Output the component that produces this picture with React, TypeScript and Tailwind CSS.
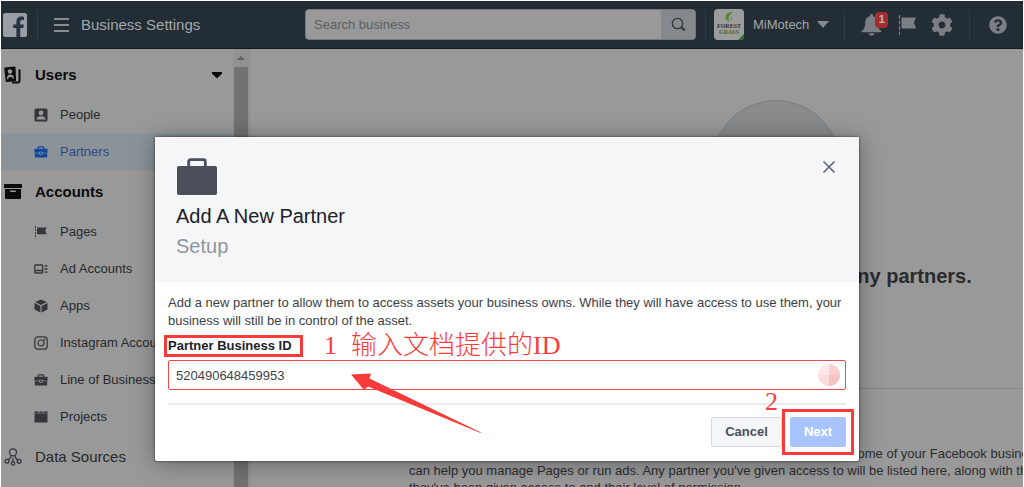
import type { ReactNode } from "react";
import { FaCog, FaQuestionCircle } from "react-icons/fa";
import { X } from "lucide-react";

function FacebookLogo() {
  return (
    <svg width="24" height="24" viewBox="0 0 24 24" aria-label="Facebook">
      <rect width="24" height="24" rx="2" fill="#9a9da3" />
      <path
        d="M13.4 24v-9h-3.200v-3.600h3.200V8.600c0-3.200 2-5 4.900-5 1.300 0 2 .1 2.700.2v3.200h-1.900c-1.500 0-1.900.8-1.900 1.900v2.500h3.600l-.5 3.600h-3.100v9z"
        fill="#26344a"
      />
    </svg>
  );
}

function UsersIcon() {
  return (
    <svg width="18" height="18" viewBox="0 0 18 18">
      <path d="M1 1.500 10.500.5c.5 0 .9.300 1 .8l.5 12.900c0 .5-.3.900-.8 1l-8.500.8c-.5 0-.9-.3-1-.8L.3 2.500c0-.5.2-.9.7-1z" fill="#0b0b0d" />
      <path d="M15.500 3.500v11c0 1.300-.7 2-2 2H8" fill="none" stroke="#0b0b0d" strokeWidth="2" />
      <circle cx="6" cy="5.500" r="2.300" fill="#999" />
      <path d="M2.900 13.300c0-3.200 1.100-4.600 3.400-4.700 2.300 0 3.400 1.200 3.700 4.100l-1.500.1-.3-1.800-3.600.3-.2 1.900z" fill="#999" />
    </svg>
  );
}

function ArchiveIcon() {
  return (
    <svg width="18" height="16" viewBox="0 0 18 16" fill="#0b0b0d">
      <rect width="18" height="4" rx=".6" />
      <path d="M1 5h16v9.200c0 .5-.3.8-.8.8H1.800c-.5 0-.8-.3-.8-.8z" />
      <rect x="6" y="6.500" width="6" height="1.500" rx=".7" fill="#999" />
    </svg>
  );
}

function NetworkIcon() {
  return (
    <svg width="18" height="18" viewBox="0 0 18 18" fill="none" stroke="#34363b" strokeWidth="1.300">
      <circle cx="9" cy="4.300" r="3.500" />
      <path d="M7.200 7.300c0 2.400-.8 3.200-2.900 4.900M10.800 7.300c0 2.400.8 3.200 2.900 4.900M9 10v3.500" />
      <circle cx="2.900" cy="13.300" r="1.900" />
      <circle cx="9" cy="15.400" r="1.700" />
      <circle cx="15.100" cy="13.300" r="1.900" />
    </svg>
  );
}

function PersonIcon() {
  return (
    <svg width="14" height="14" viewBox="0 0 14 14">
      <rect x=".5" y=".5" width="13" height="13" rx="1.600" fill="#34363b" />
      <circle cx="7" cy="5" r="2.400" fill="#999" />
      <path d="M2.500 11.500c.1-1.800 1.200-2.800 3.200-3.200h2.600c2 .4 3.100 1.400 3.200 3.200z" fill="#999" />
    </svg>
  );
}

function ToolboxIcon({ fill, gap }: { fill: string; gap: string }) {
  return (
    <svg width="14" height="14" viewBox="0 0 14 14">
      <path d="M4.300 4V2.600c0-.5.3-.8.8-.8h3.800c.5 0 .8.3.8.8V4" fill="none" stroke={fill} strokeWidth="1.300" />
      <path d="M1.200 3.700h11.600c.5 0 .8.3.8.8v3.200H.4V4.500c0-.5.3-.8.8-.8z" fill={fill} />
      <path d="M.8 8.300h12.400v3.500c0 .4-.3.7-.7.7h-11c-.4 0-.7-.3-.7-.7z" fill={fill} />
      <path d="M5.200 6.700h3.600v2.600l-1.800.9-1.800-.9z" fill={gap} />
      <path d="M6 7.400h2v1.500l-1 .5-1-.5z" fill={fill} />
    </svg>
  );
}

function FlagIcon() {
  return (
    <svg width="14" height="14" viewBox="0 0 14 14" fill="#34363b">
      <path d="M1.500 1v12.500" stroke="#34363b" strokeWidth="1" strokeDasharray="2 1" />
      <path d="M3 2.500h9.600l-1.300 3.200 1.300 3.600H3z" />
    </svg>
  );
}

function AdIcon() {
  return (
    <svg width="14" height="14" viewBox="0 0 14 14" fill="none" stroke="#34363b" strokeWidth="1.300">
      <rect x=".8" y="3" width="7.800" height="8" rx=".8" />
      <path d="M1 8.500h7.500M10.500 3.800h3M10.500 7h3M10.500 10.200h3" />
    </svg>
  );
}

function CubeIcon() {
  return (
    <svg width="14" height="14" viewBox="0 0 14 14" fill="#34363b">
      <path d="M7 .5l5.800 2.600L7 5.900 1.200 3.100zM.5 4.100l5.900 2.800v6.600L.5 10.500zM13.500 4.100L7.600 6.900v6.600l5.900-3z" />
    </svg>
  );
}

function InstagramIcon() {
  return (
    <svg width="14" height="14" viewBox="0 0 14 14" fill="none" stroke="#34363b" strokeWidth="1.200">
      <rect x=".8" y=".8" width="12.400" height="12.400" rx="3" />
      <circle cx="7" cy="7" r="3" />
      <circle cx="10.500" cy="3.500" r=".4" fill="#34363b" />
    </svg>
  );
}

function ProjectsIcon() {
  return (
    <svg width="14" height="14" viewBox="0 0 14 14" fill="#34363b">
      <path d="M.5 1.500h4v1.200h1V1.500h3v1.200h1V1.500h4v11H.5z" />
      <path d="M.5 3.500h13" stroke="#77797c" strokeWidth=".6" />
    </svg>
  );
}

function BriefcaseIcon() {
  return (
    <svg width="42" height="38" viewBox="0 0 42 38">
      <path d="M12.700 10V4.500c0-1.200.6-1.800 1.800-1.800h13c1.200 0 1.800.6 1.800 1.800V10" fill="none" stroke="#4b4f5a" strokeWidth="2.800" />
      <rect x="1" y="9" width="40" height="29" rx="1.800" fill="#4b4f5a" />
    </svg>
  );
}

function BellIcon() {
  return (
    <svg width="21" height="22" viewBox="0 0 21 22" fill="#7b7f84">
      <path d="M10.500 0c.9 0 1.600.7 1.600 1.600v.6c2.900.7 4.700 3 4.700 6.200 0 4.600.9 6.600 3.400 8.400.5.400.3 1.400-.6 1.400H1.400c-.9 0-1.100-1-.6-1.400 2.500-1.800 3.400-3.800 3.400-8.400 0-3.200 1.800-5.500 4.700-6.200v-.6c0-.9.7-1.600 1.600-1.600z" />
      <path d="M7.500 19.300h6c-.3 1.500-1.500 2.400-3 2.400s-2.700-.9-3-2.400z" />
    </svg>
  );
}

function BrandAvatar() {
  return (
    <span className="relative flex h-[31px] w-[30px] flex-col items-center overflow-hidden rounded-sm bg-[#9c9c9c] pt-[2px]">
      <svg width="12" height="12" viewBox="0 0 12 12">
        <path d="M10.500 1C5.500.6 2.200 3 2.400 6.200c.1 2.300 2 3.900 4.200 4.300C4.700 7.500 5.700 3.600 10.500 1z" fill="#4f8a35" />
        <path d="M8 4.500c1.800 1.700 1.800 4.200-.5 5.700.5-2 .6-3.700.5-5.700z" fill="#6b8f4a" />
      </svg>
      <span className="font-['Liberation_Serif',serif] text-[6px] leading-[6px] font-bold text-[#333]">FOREST</span>
      <span className="font-['Liberation_Serif',serif] text-[6px] leading-[6px] font-bold text-[#3d6b2e]">GRASS</span>
      <svg className="absolute right-0 bottom-0" width="6" height="6" viewBox="0 0 6 6">
        <path d="M6 0v6H0z" fill="#1f7a1a" />
      </svg>
    </span>
  );
}

function TopBar() {
  return (
    <header className="flex h-12 shrink-0 items-center border-b border-[#15191d] bg-[#222d36] text-[#a4a7aa]">
      <div className="flex w-[304px] shrink-0 items-center pl-[2px]">
        <FacebookLogo />
        <span className="ml-[10px] h-[30px] w-px bg-[#2f3d4b]" />
        <button type="button" aria-label="Menu" className="ml-4 flex w-[15px] flex-col gap-1">
          <span className="h-[2px] bg-[#888c90]" />
          <span className="h-[2px] bg-[#888c90]" />
          <span className="h-[2px] bg-[#888c90]" />
        </button>
        <h1 className="ml-3 text-[15px] leading-5 font-medium">Business Settings</h1>
      </div>
      <form className="flex h-[31px] min-w-0 flex-1 overflow-hidden rounded-sm border border-[#75797d] bg-[#999]">
        <input
          type="text"
          aria-label="Search business"
          placeholder="Search business"
          className="min-w-0 flex-1 px-2 text-[13px] text-[#333] outline-none placeholder:text-[#5c5e62]"
        />
        <button type="button" aria-label="Search" className="flex w-[34px] items-center justify-center bg-[#85888c]">
          <svg width="15" height="15" viewBox="0 0 15 15" fill="none" stroke="#33363a" strokeWidth="1.300">
            <circle cx="6.500" cy="6.500" r="5.200" />
            <path d="M10.300 10.300l3.500 3" strokeWidth="2.200" />
          </svg>
        </button>
      </form>
      <div className="flex w-[327px] shrink-0 items-center pl-[9px]">
        <span className="h-[30px] w-px bg-[#2f3d4b]" />
        <button type="button" className="ml-2 flex items-center">
          <BrandAvatar />
          <span className="ml-[9px] text-[13px] leading-4">MiMotech</span>
          <svg className="ml-2" width="12" height="7" viewBox="0 0 12 7">
            <path d="M0 0h12L6 7z" fill="#85898d" />
          </svg>
        </button>
        <span className="ml-[15px] h-[30px] w-px bg-[#2f3d4b]" />
        <button type="button" aria-label="Notifications" className="relative ml-4">
          <BellIcon />
          <span className="absolute -top-[2px] left-[14px] flex h-4 w-[13px] items-center justify-center rounded-sm bg-[#a62c2f] text-[11px] font-bold text-[#bbb]">
            1
          </span>
        </button>
        <button type="button" aria-label="Pages" className="ml-4">
          <svg width="20" height="22" viewBox="0 0 20 22" fill="#7b7f84">
            <path d="M1.500 1v20" stroke="#7b7f84" strokeWidth="1.200" strokeDasharray="4 1.500" />
            <path d="M3.500 3.500H18l-2 5 2 6H3.500z" />
          </svg>
        </button>
        <button type="button" aria-label="Settings" className="ml-[13px] text-[#7b7f84]">
          <FaCog size={22} />
        </button>
        <span className="ml-4 h-[30px] w-px bg-[#2f3d4b]" />
        <button type="button" aria-label="Help" className="ml-[19px] text-[#7b7f84]">
          <FaQuestionCircle size={18} />
        </button>
      </div>
    </header>
  );
}

function NavHeading({ icon, label, bold, children }: { icon: ReactNode; label: string; bold?: boolean; children?: ReactNode }) {
  return (
    <a href="#" className="flex h-[43px] items-center pt-px pl-[3px] text-[15px]">
      <span className="w-[31px]">{icon}</span>
      <span className={bold ? "flex-1 font-bold text-[#0b0b0d]" : "flex-1 text-[#26282c]"}>{label}</span>
      {children}
    </a>
  );
}

function NavItem({ icon, label, active }: { icon: ReactNode; label: string; active?: boolean }) {
  return (
    <a
      href="#"
      className={
        active
          ? "flex h-[37px] items-center gap-3 bg-[#8b9399] pl-[33px] text-[13px] whitespace-nowrap text-[#2c4587]"
          : "flex h-[37px] items-center gap-3 pl-[33px] text-[13px] whitespace-nowrap text-[#26282c]"
      }
    >
      {icon}
      {label}
    </a>
  );
}

function Sidebar() {
  return (
    <nav className="flex w-[249px] shrink-0">
      <div className="flex-1 pt-1">
        <NavHeading icon={<UsersIcon />} label="Users" bold>
          <svg className="mr-[11px]" width="10" height="6" viewBox="0 0 10 6">
            <path d="M0 0h10v1.500L5.500 6h-1L0 1.500z" fill="#0b0b0d" />
          </svg>
        </NavHeading>
        <NavItem icon={<PersonIcon />} label="People" />
        <NavItem icon={<ToolboxIcon fill="#12489c" gap="#8b9399" />} label="Partners" active />
        <NavHeading icon={<ArchiveIcon />} label="Accounts" bold />
        <NavItem icon={<FlagIcon />} label="Pages" />
        <NavItem icon={<AdIcon />} label="Ad Accounts" />
        <NavItem icon={<CubeIcon />} label="Apps" />
        <NavItem icon={<InstagramIcon />} label="Instagram Accounts" />
        <NavItem icon={<ToolboxIcon fill="#34363b" gap="#999" />} label="Line of Businesses" />
        <NavItem icon={<ProjectsIcon />} label="Projects" />
        <NavHeading icon={<NetworkIcon />} label="Data Sources" />
      </div>
      <div className="flex w-[17px] flex-col items-center border-r border-[#8a8a8a] bg-[#929292]">
        <svg className="my-[7px]" width="8" height="4" viewBox="0 0 8 4">
          <path d="M0 4l4-4 4 4z" fill="#5f5f5f" />
        </svg>
        <div className="w-[14px] flex-1 bg-[#727272]" />
      </div>
    </nav>
  );
}

function EmptyState() {
  return (
    <main className="min-w-0 flex-1 overflow-hidden pl-[159px]">
      <section className="flex w-[734px] flex-col items-center pt-[51px]">
        <div className="size-32 rounded-full border border-[#7d7d7f] bg-[#8a8b8d]" />
        <h2 className="mt-9 text-[20px] leading-6 font-bold text-[#2b2b2d]">This business doesn't have any partners.</h2>
        <hr className="mt-[100px] w-full border-[#868686]" />
        <div className="mt-14 w-full text-[13px] leading-[17px] whitespace-nowrap text-[#2b2c2f]">
          <p>Partners are other businesses or agencies that you have worked with today. Some of your Facebook business partners</p>
          <p>can help you manage Pages or run ads. Any partner you've given access to will be listed here, along with the assets</p>
          <p>they've been given access to and their level of permission.</p>
        </div>
      </section>
    </main>
  );
}

function PartnerDialog() {
  return (
    <div
      role="dialog"
      aria-labelledby="dialog-title"
      className="relative w-full max-w-[704px] self-start rounded-xs bg-white shadow-[0_2px_24px_rgba(0,0,0,0.35),0_0_2px_1px_rgba(0,0,0,0.3)]"
    >
      <div className="flex h-[145px] items-start justify-between bg-[#f5f6f8] pt-5 pr-5 pl-[21px]">
        <div>
          <BriefcaseIcon />
          <h2 id="dialog-title" className="mt-[6px] text-[20px] leading-[30px] text-[#1d2129]">
            Add A New Partner
          </h2>
          <p className="text-[20px] leading-[30px] text-[#90949c]">Setup</p>
        </div>
        <button type="button" aria-label="Close" className="text-[#606673]">
          <X size={20} strokeWidth={2} />
        </button>
      </div>
      <div className="px-[13px] pt-3 pb-[14px]">
        <p className="text-[13px] leading-[18px] text-[#3b3e46]">
          Add a new partner to allow them to access assets your business owns. While they will have access to use them, your
          business will still be in control of the asset.
        </p>
        <div className="-ml-1 flex h-[30px] items-center gap-[21px] pt-[2px]">
          <label
            htmlFor="partner-id"
            className="flex h-[22px] w-[139px] items-center border-[3px] border-[#f93a3a] pl-px text-[13px] font-bold whitespace-nowrap text-[#1d2129]"
          >
            Partner Business ID
          </label>
          <p className="flex gap-[14px] font-['Liberation_Serif','Noto_Sans_CJK_SC',serif] text-[26px] leading-7 font-light whitespace-nowrap text-[#f93a3a]">
            <span>1</span>
            <span>输入文档提供的ID</span>
          </p>
        </div>
        <div className="relative">
          <input
            id="partner-id"
            type="text"
            defaultValue="520490648459953"
            className="block h-[30px] w-full rounded-xs border border-[#f5494d] px-[7px] text-[13px] text-[#3f4249] outline-none"
          />
          <svg className="absolute top-1 right-[6px]" width="22" height="22" viewBox="0 0 22 22">
            <path d="M11 0A11 11 0 0 0 0 11h11z" fill="#fde6e6" />
            <path d="M0 11a11 11 0 0 0 11 11V11z" fill="#fbdcdc" />
            <path d="M11 0a11 11 0 0 1 11 11H11z" fill="#fad0d0" />
            <path d="M22 11a11 11 0 0 1-11 11V11z" fill="#f8c2c4" />
          </svg>
          <svg className="absolute top-3 left-[182px]" width="134" height="62" viewBox="0 0 134 62">
            <path d="M1 2.500l20-1-1.500 5L131 60.500l-.5.500L18 14.500 14 18z" fill="#f93a3a" />
          </svg>
        </div>
        <div className="mt-[13px] flex justify-end border-t-2 border-[#e9ebee] pt-3">
          <button
            type="button"
            className="h-[30px] w-[71px] rounded-xs border border-[#d5d8dd] bg-[#f5f6f7] text-[13px] font-bold text-[#4b4f56]"
          >
            Cancel
          </button>
          <div className="relative ml-2">
            <button type="button" className="h-[30px] w-14 rounded-xs bg-[#a8c4fc] text-[13px] font-bold text-white">
              Next
            </button>
            <span className="absolute -inset-2 border-[3px] border-[#f93a3a]" />
            <span className="absolute -top-[30px] -left-[25px] font-['Liberation_Serif',serif] text-[26px] leading-[30px] text-[#f93a3a]">
              2
            </span>
          </div>
        </div>
      </div>
    </div>
  );
}

export default function App() {
  return (
    <div className="relative h-screen overflow-hidden bg-white p-px pb-0 font-['Liberation_Sans',Arial,sans-serif]">
      <div className="flex h-full flex-col overflow-hidden bg-[#999]">
        <TopBar />
        <div className="flex min-h-0 flex-1 overflow-hidden">
          <Sidebar />
          <EmptyState />
        </div>
      </div>
      <div className="absolute inset-0 flex justify-center pt-[137px] pr-[10px]">
        <PartnerDialog />
      </div>
    </div>
  );
}
